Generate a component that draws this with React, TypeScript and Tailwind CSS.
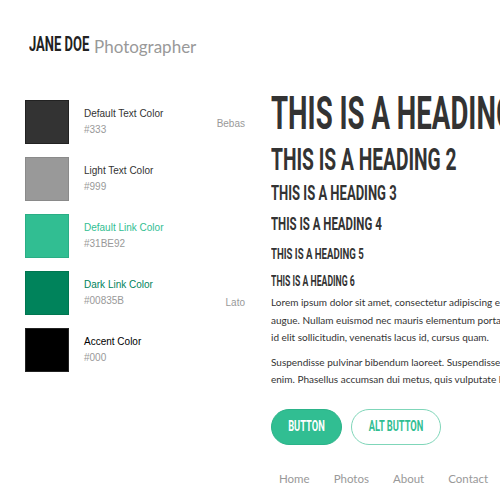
import React from "react";

const bebas = "font-['Roboto','Liberation_Sans',sans-serif] font-bold uppercase whitespace-nowrap";
const lato = "font-['Lato','Liberation_Sans',sans-serif]";
const helv = "font-['Liberation_Sans','Arial',sans-serif]";

const swatches = [
  { name: "Default Text Color", hex: "#333", bg: "bg-[#333333]", border: "border-[#222222]", text: "text-[#333333]" },
  { name: "Light Text Color", hex: "#999", bg: "bg-[#999999]", border: "border-[#8a8a8a]", text: "text-[#333333]" },
  { name: "Default Link Color", hex: "#31BE92", bg: "bg-[#31be92]", border: "border-[#2aae85]", text: "text-[#31be92]" },
  { name: "Dark Link Color", hex: "#00835B", bg: "bg-[#00835b]", border: "border-[#007650]", text: "text-[#00835b]" },
  { name: "Accent Color", hex: "#000", bg: "bg-[#000000]", border: "border-[#222222]", text: "text-[#000000]" },
];

function Heading({ size, className }: { size: string; className: string }) {
  return (
    <div className={`${bebas} text-[#333333] origin-left ${className}`}>
      {size}
    </div>
  );
}

export default function App() {
  return (
    <div className="w-[500px] h-[500px] overflow-hidden bg-white relative">
      <div className="flex items-end pl-[29px] pt-[33px] h-[57px]">
        <div className="w-[65px] shrink-0">
          <span className={`${bebas} inline-block origin-left scale-x-[0.65] text-[20px] leading-[20px] text-[#222222]`}>
            Jane Doe
          </span>
        </div>
        <span className={`${lato} text-[17px] leading-[20px] text-[#999999]`}>Photographer</span>
      </div>

      <div className="flex mt-[43px]">
        <div className="flex flex-col gap-[13px] pl-[25px] w-[190px] shrink-0">
          {swatches.map((s) => (
            <div key={s.name} className="flex items-center gap-[15px] h-[44px]">
              <div className={`w-[44px] h-[44px] shrink-0 border ${s.bg} ${s.border}`} />
              <div className={`${helv} text-[10px] leading-[16px] whitespace-nowrap`}>
                <div className={s.text}>{s.name}</div>
                <div className="text-[#999999]">{s.hex}</div>
              </div>
            </div>
          ))}
        </div>

        <div className={`${helv} w-[55px] shrink-0 text-right text-[10px] leading-[14px] text-[#999999]`}>
          <div className="mt-[17px]">Bebas</div>
          <div className="mt-[165px]">Lato</div>
        </div>

        <div className="ml-[26px] flex flex-col -mt-[10px] shrink-0">
          <Heading size="This is a heading 1" className="scale-x-[0.6] text-[46px] leading-[46px]" />
          <Heading size="This is a heading 2" className="scale-x-[0.62] text-[31px] leading-[31px] mt-[8px]" />
          <Heading size="This is a heading 3" className="scale-x-[0.62] text-[21px] leading-[21px] mt-[8px]" />
          <Heading size="This is a heading 4" className="scale-x-[0.62] text-[18.5px] leading-[19px] mt-[11px]" />
          <Heading size="This is a heading 5" className="scale-x-[0.62] text-[15.5px] leading-[16px] mt-[12px]" />
          <Heading size="This is a heading 6" className="scale-x-[0.62] text-[14px] leading-[14px] mt-[12px]" />

          <div className={`${lato} text-[10px] leading-[17.5px] text-[#333333] whitespace-nowrap mt-[6px]`}>
            <p>
              Lorem ipsum dolor sit amet, consectetur adipiscing elit. Donec ac
              <br />
              augue. Nullam euismod nec mauris elementum porta. Sed
              <br />
              id elit sollicitudin, venenatis lacus id, cursus quam.
            </p>
            <p className="mt-[7px]">
              Suspendisse pulvinar bibendum laoreet. Suspendisse potenti. Nam
              <br />
              enim. Phasellus accumsan dui metus, quis vulputate ligula.
            </p>
          </div>

          <div className="flex gap-[9px] mt-[20px]">
            <button className="w-[71px] h-[36px] rounded-full bg-[#31be92] border border-[#2bb389] flex items-center justify-center">
              <span className={`${bebas} inline-block scale-x-[0.62] text-[15px] leading-[15px] text-white`}>Button</span>
            </button>
            <button className="w-[90px] h-[36px] rounded-full bg-white border border-[#7fd6b9] flex items-center justify-center">
              <span className={`${bebas} inline-block scale-x-[0.62] text-[15px] leading-[15px] text-[#31be92]`}>Alt Button</span>
            </button>
          </div>

          <nav className={`${lato} flex gap-[24px] pl-[8px] mt-[27px] text-[11.5px] leading-[14px] text-[#999999]`}>
            <span>Home</span>
            <span>Photos</span>
            <span>About</span>
            <span>Contact</span>
          </nav>
        </div>
      </div>
    </div>
  );
}
